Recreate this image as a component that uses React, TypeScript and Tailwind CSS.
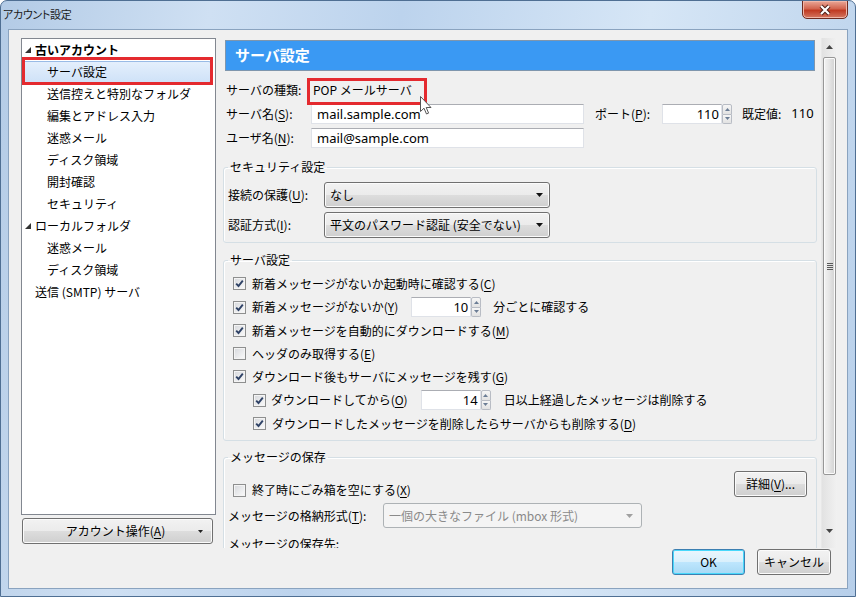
import React from "react";

type Node = { t: string; lvl: 0 | 1; bold?: boolean; arrow?: boolean; sel?: boolean };

const tree: Node[] = [
  { t: "古いアカウント", lvl: 0, bold: true, arrow: true },
  { t: "サーバ設定", lvl: 1, sel: true },
  { t: "送信控えと特別なフォルダ", lvl: 1 },
  { t: "編集とアドレス入力", lvl: 1 },
  { t: "迷惑メール", lvl: 1 },
  { t: "ディスク領域", lvl: 1 },
  { t: "開封確認", lvl: 1 },
  { t: "セキュリティ", lvl: 1 },
  { t: "ローカルフォルダ", lvl: 0, arrow: true },
  { t: "迷惑メール", lvl: 1 },
  { t: "ディスク領域", lvl: 1 },
  { t: "送信 (SMTP) サーバ", lvl: 0 },
];

const U = ({ c }: { c: string }) => <span className="underline underline-offset-2">{c}</span>;

const Check = ({ on }: { on: boolean }) => (
  <span className="w-[13px] h-[13px] shrink-0 border border-[#8e8f8f] bg-[linear-gradient(135deg,#d6d8dc,#fbfbfb)] shadow-[inset_0_0_0_1px_#f4f4f4] flex items-center justify-center">
    {on && (
      <svg width="9" height="9" viewBox="0 0 9 9">
        <path d="M1.2 4.6 L3.5 7 L7.8 1.6" fill="none" stroke="#2f4266" strokeWidth="1.9" />
      </svg>
    )}
  </span>
);

const Spin = ({ value }: { value: string }) => (
  <span className="flex h-[20px] w-[70px]">
    <span className="w-[60px] h-full bg-white border border-[#dfe2e8] border-t-[#abadb3] text-right pr-[2px] leading-[18px] font-['Noto_Sans',sans-serif] text-[13px]">
      {value}
    </span>
    <span className="w-[10px] h-full flex flex-col">
      <span className="flex-1 flex items-center justify-center bg-[linear-gradient(#f6f6f6,#e2e2e2)] border border-[#b8bcc4] rounded-t-[2px]">
        <svg width="5" height="3" viewBox="0 0 5 3"><path d="M0 3 L2.5 0 L5 3Z" fill="#6b7d95" /></svg>
      </span>
      <span className="flex-1 flex items-center justify-center bg-[linear-gradient(#f6f6f6,#e2e2e2)] border border-t-0 border-[#b8bcc4] rounded-b-[2px]">
        <svg width="5" height="3" viewBox="0 0 5 3"><path d="M0 0 L2.5 3 L5 0Z" fill="#6b7d95" /></svg>
      </span>
    </span>
  </span>
);

const Arrow = ({ gray }: { gray?: boolean }) => (
  <svg width="7" height="4" viewBox="0 0 7 4">
    <path d="M0 0 L7 0 L3.5 4Z" fill={gray ? "#a0a0a0" : "#111"} />
  </svg>
);

const btn =
  "h-[26px] flex items-center rounded-[3px] border border-[#707070] bg-[linear-gradient(#f2f2f2_0%,#ebebeb_50%,#dddddd_50%,#cfcfcf_100%)] shadow-[inset_0_0_0_1px_#fbfbfb]";

const Row = ({ on, sub, children }: { on: boolean; sub?: boolean; children: React.ReactNode }) => (
  <div className={`h-[23px] flex items-center ${sub ? "pl-[25px]" : "pl-[5px]"}`}>
    <Check on={on} />
    <span className="ml-[6px] flex items-center">{children}</span>
  </div>
);

const group = "border border-[#d5dfe5] rounded-[3px] shadow-[inset_1px_1px_0_#ffffff] ml-[2px] w-[594px] pl-[4px]";

export default function App() {
  return (
    <div className="w-[856px] h-[597px] overflow-hidden rounded-t-[7px] border border-[#4f6f93] bg-[linear-gradient(100deg,#b3cbe6_0%,#cfe0f3_22%,#bcd3ed_42%,#d6e6f6_68%,#b7cfea_100%)] font-['Noto_Sans_CJK_JP',sans-serif] text-[12px] text-black flex flex-col">
      {/* title bar */}
      <div className="h-[28px] shrink-0 flex justify-between pl-[2px] pr-[7px]">
        <span className="mt-[6px] text-[11px] leading-[14px] tracking-[-0.3px] [font-feature-settings:'palt'] text-[#1a1a1a]">アカウント設定</span>
        <div className="w-[46px] h-[19px] -mt-px rounded-b-[5px] border border-[#6e2b21] bg-[linear-gradient(#eaa898,#d2654f_45%,#c03a22_55%,#d47762)] shadow-[inset_0_0_0_1px_#f0b7a8] flex items-center justify-center">
          <svg width="14" height="12" viewBox="0 0 14 12">
            <path d="M3 2 L11 10 M11 2 L3 10" stroke="#4a1d15" strokeWidth="4" />
            <path d="M3 2 L11 10 M11 2 L3 10" stroke="#ffffff" strokeWidth="2.2" />
          </svg>
        </div>
      </div>

      {/* client */}
      <div className="mx-[7px] h-[560px] shrink-0 bg-[#f0f0f0] border border-[#8aa3bf] flex">
        {/* left */}
        <div className="ml-[12px] mt-[8px] w-[195px] flex flex-col">
          <div className="h-[477px] bg-white border border-[#828790] overflow-hidden">
            {tree.map((n, i) => (
              <div key={i} className="relative h-[22px] flex items-center">
                {n.sel && (
                  <div className="absolute inset-y-0 left-[1px] w-[188px] rounded-[2px] border border-[#99bbe6] bg-[linear-gradient(#e4effc,#cfe2f8)]" />
                )}
                <div className={`relative flex items-center ${n.lvl ? "pl-[25px]" : n.arrow ? "pl-[3px]" : "pl-[13px]"}`}>
                  {n.arrow && (
                    <svg className="mr-[4px]" width="6" height="6" viewBox="0 0 6 6">
                      <path d="M6 0 V6 H0Z" fill="#333" />
                    </svg>
                  )}
                  <span className={n.bold ? "font-bold" : ""}>{n.t}</span>
                </div>
                {n.sel && <div className="absolute left-0 top-[-4px] w-[191px] h-[28px] border-[3px] border-[#e42a2f]" />}
              </div>
            ))}
          </div>
          <div className={`${btn} mt-[3px] ml-[1px] w-[191px] justify-between`}>
            <span className="flex-1 text-center pl-[10px]">
              アカウント操作(<U c="A" />)
            </span>
            <svg className="mr-[9px]" width="5" height="3" viewBox="0 0 5 3"><path d="M0 0 L5 0 L2.5 3Z" fill="#222" /></svg>
          </div>
        </div>

        {/* right */}
        <div className="ml-[5px] mt-[8px] w-[616px] flex flex-col">
          <div className="h-[510px] flex">
            <div className="w-[600px] h-full overflow-hidden">
              <div className="mt-[2px] ml-[4px] w-[590px] h-[31px] bg-[#3a99f3] border border-[#7f96ad] flex items-center pl-[9px] text-white font-bold text-[15px]">
                サーバ設定
              </div>

              <div className="relative mt-[7px] h-[24px] flex items-center pl-[5px]">
                <span className="w-[85px]">サーバの種類:</span>
                <span className="pl-[2px]">POP メールサーバ</span>
                <div className="absolute left-[86px] top-0 w-[120px] h-[27px] border-[3px] border-[#e42a2f]" />
                <svg className="absolute left-[199px] top-[18px]" width="12" height="19" viewBox="0 0 12 19">
                  <path d="M0.5 0.5 L0.5 15.5 L4 12.2 L6.5 18 L8.6 17.1 L6.2 11.5 L11 11.5 Z" fill="#ffffff" stroke="#555" strokeWidth="1" />
                </svg>
              </div>
              <div className="h-[24px] flex items-center pl-[5px]">
                <span className="w-[85px]">
                  サーバ名(<U c="S" />):
                </span>
                <span className="w-[273px] h-[20px] bg-white border border-[#dfe2e8] border-t-[#abadb3] pl-[5px] leading-[18px] font-['Noto_Sans',sans-serif] text-[13px]">
                  mail.sample.com
                </span>
                <span className="ml-[11px] w-[67px]">
                  ポート(<U c="P" />):
                </span>
                <Spin value="110" />
                <span className="ml-[10px]">既定値:</span>
                <span className="ml-[10px] font-['Noto_Sans',sans-serif] text-[13px]">110</span>
              </div>
              <div className="h-[24px] flex items-center pl-[5px]">
                <span className="w-[85px]">
                  ユーザ名(<U c="N" />):
                </span>
                <span className="w-[273px] h-[20px] bg-white border border-[#dfe2e8] border-t-[#abadb3] pl-[5px] leading-[18px] font-['Noto_Sans',sans-serif] text-[13px]">
                  mail@sample.com
                </span>
              </div>

              <fieldset className={`${group} mt-[9px] pt-[7px] pb-[5px]`}>
                <legend className="px-[2px] leading-[16px]">セキュリティ設定</legend>
                <div className="h-[25px] flex items-center">
                  <span className="w-[96px]">
                    接続の保護(<U c="U" />):
                  </span>
                  <span className={`${btn} w-[226px] h-[25px] justify-between pl-[5px] pr-[6px]`}>
                    <span>なし</span>
                    <Arrow />
                  </span>
                </div>
                <div className="mt-[5px] h-[25px] flex items-center">
                  <span className="w-[96px]">
                    認証方式(<U c="I" />):
                  </span>
                  <span className={`${btn} w-[226px] h-[25px] justify-between pl-[5px] pr-[6px]`}>
                    <span>平文のパスワード認証 (安全でない)</span>
                    <Arrow />
                  </span>
                </div>
              </fieldset>

              <fieldset className={`${group} mt-[9px] pt-[4px] pb-[5px]`}>
                <legend className="px-[2px] leading-[16px]">サーバ設定</legend>
                <Row on>
                  新着メッセージがないか起動時に確認する(<U c="C" />)
                </Row>
                <div className="h-[24px] flex items-center pl-[5px]">
                  <Check on />
                  <span className="ml-[6px]">
                    新着メッセージがないか(<U c="Y" />)
                  </span>
                  <span className="ml-[13px]">
                    <Spin value="10" />
                  </span>
                  <span className="ml-[12px]">分ごとに確認する</span>
                </div>
                <Row on>
                  新着メッセージを自動的にダウンロードする(<U c="M" />)
                </Row>
                <Row on={false}>
                  ヘッダのみ取得する(<U c="E" />)
                </Row>
                <Row on>
                  ダウンロード後もサーバにメッセージを残す(<U c="G" />)
                </Row>
                <div className="h-[24px] flex items-center pl-[25px]">
                  <Check on />
                  <span className="ml-[5px]">
                    ダウンロードしてから(<U c="O" />)
                  </span>
                  <span className="ml-[13px]">
                    <Spin value="14" />
                  </span>
                  <span className="ml-[13px]">日以上経過したメッセージは削除する</span>
                </div>
                <Row on sub>
                  ダウンロードしたメッセージを削除したらサーバからも削除する(<U c="D" />)
                </Row>
              </fieldset>

              <fieldset className={`${group} mt-[8px] pt-[6px] pr-[9px] pb-[5px]`}>
                <legend className="px-[2px] leading-[16px]">メッセージの保存</legend>
                <div className="flex justify-between items-start">
                  <div className="mt-[8px] h-[22px] flex items-center pl-[5px]">
                    <Check on={false} />
                    <span className="ml-[6px]">
                      終了時にごみ箱を空にする(<U c="X" />)
                    </span>
                  </div>
                  <div className={`${btn} w-[73px] justify-center`}>
                    詳細(<U c="V" />)...
                  </div>
                </div>
                <div className="mt-[2px] h-[25px] flex items-center">
                  <span className="w-[155px]">
                    メッセージの格納形式(<U c="T" />):
                  </span>
                  <span className="w-[259px] h-[25px] flex items-center justify-between rounded-[3px] border border-[#adb2b5] bg-[#f4f4f4] pl-[5px] pr-[8px] text-[#8a8a8a]">
                    <span>一個の大きなファイル (mbox 形式)</span>
                    <Arrow gray />
                  </span>
                </div>
                <div className="mt-[4px] h-[24px] flex items-center">メッセージの保存先:</div>
              </fieldset>
            </div>

            {/* scrollbar */}
            <div className="w-[16px] h-full flex flex-col bg-[linear-gradient(90deg,#e2e2e2,#f1f1f1)] border-l border-[#e8e8e8]">
              <div className="h-[17px] flex items-center justify-center">
                <svg width="7" height="4" viewBox="0 0 7 4"><path d="M0 4 L3.5 0 L7 4Z" fill="#444" /></svg>
              </div>
              <div className="mt-[2px] h-[418px] mx-[1px] rounded-[2px] border border-[#979797] bg-[linear-gradient(90deg,#f3f3f3,#e6e6e6_45%,#d2d2d2)] shadow-[inset_0_0_0_1px_#fafafa] flex flex-col items-center justify-center gap-[1px]">
                <span className="w-[6px] h-px bg-[#5a5a5a]" />
                <span className="w-[6px] h-px bg-[#5a5a5a]" />
                <span className="w-[6px] h-px bg-[#5a5a5a]" />
                <span className="w-[6px] h-px bg-[#5a5a5a]" />
              </div>
              <div className="flex-1" />
              <div className="h-[17px] mb-[9px] flex items-center justify-center">
                <svg width="7" height="4" viewBox="0 0 7 4"><path d="M0 0 L7 0 L3.5 4Z" fill="#444" /></svg>
              </div>
            </div>
          </div>

          <div className="mt-[1px] flex justify-end gap-[12px] pr-[6px]">
            <div className="h-[26px] w-[73px] flex items-center justify-center rounded-[3px] border border-[#3c7fb1] bg-[linear-gradient(#eaf6fd_0%,#d9f0fc_50%,#bee6fd_50%,#a7d9f5_100%)] shadow-[inset_0_0_0_1px_#48d8fb]">
              OK
            </div>
            <div className={`${btn} w-[74px] justify-center`}>キャンセル</div>
          </div>
        </div>
      </div>
    </div>
  );
}
